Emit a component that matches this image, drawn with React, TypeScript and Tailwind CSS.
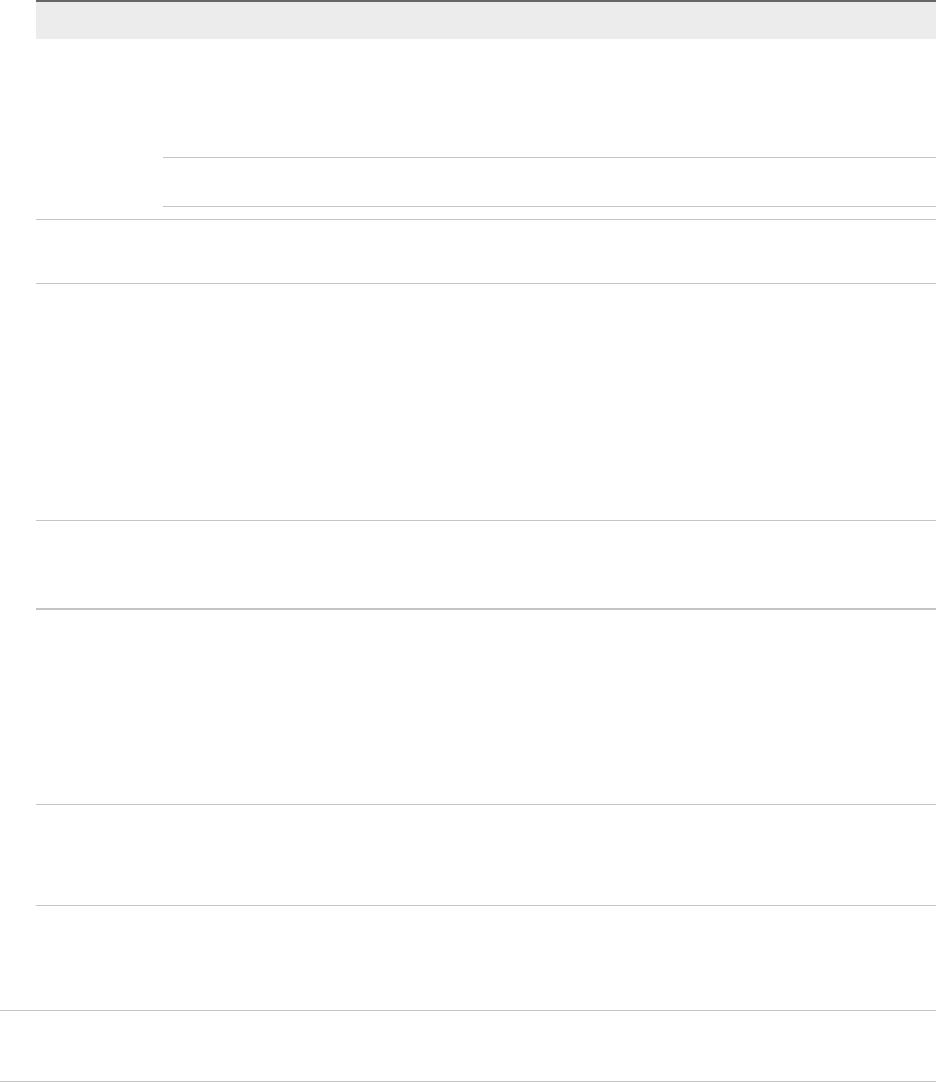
import React from 'react';

const line = 'border-[#c4c4c4]';

const Row = ({ h, thick, children }: { h: string; thick?: boolean; children?: React.ReactNode }) => (
    <div className={`${h} ${thick ? 'border-b-2' : 'border-b'} ${line} flex`}>{children}</div>
);

const App: React.FC = () => {
    return (
        <div className="w-[936px] min-h-[1082px] bg-white font-['Liberation_Sans',sans-serif] text-sm text-[#333]">
            <div className="pl-[36px]">
                {/* header */}
                <div className="h-[39px] border-t-2 border-[#666666] bg-[#ececec]"></div>

                {/* row with nested sub-rows */}
                <Row h="h-[181px]">
                    <div className="w-[127px] shrink-0"></div>
                    <div className="flex-1 flex flex-col">
                        <div className={`h-[119px] border-b ${line}`}></div>
                        <div className={`h-[49px] border-b ${line}`}></div>
                    </div>
                </Row>
                <Row h="h-[64px]" />
                <Row h="h-[237px]" />
                <Row h="h-[89px]" thick />
                <Row h="h-[195px]" />
                <Row h="h-[101px]" />
            </div>

            <div className="h-[104px]"></div>
            <div className={`h-[72px] border-t border-b ${line}`}></div>
        </div>
    );
};

export default App;
